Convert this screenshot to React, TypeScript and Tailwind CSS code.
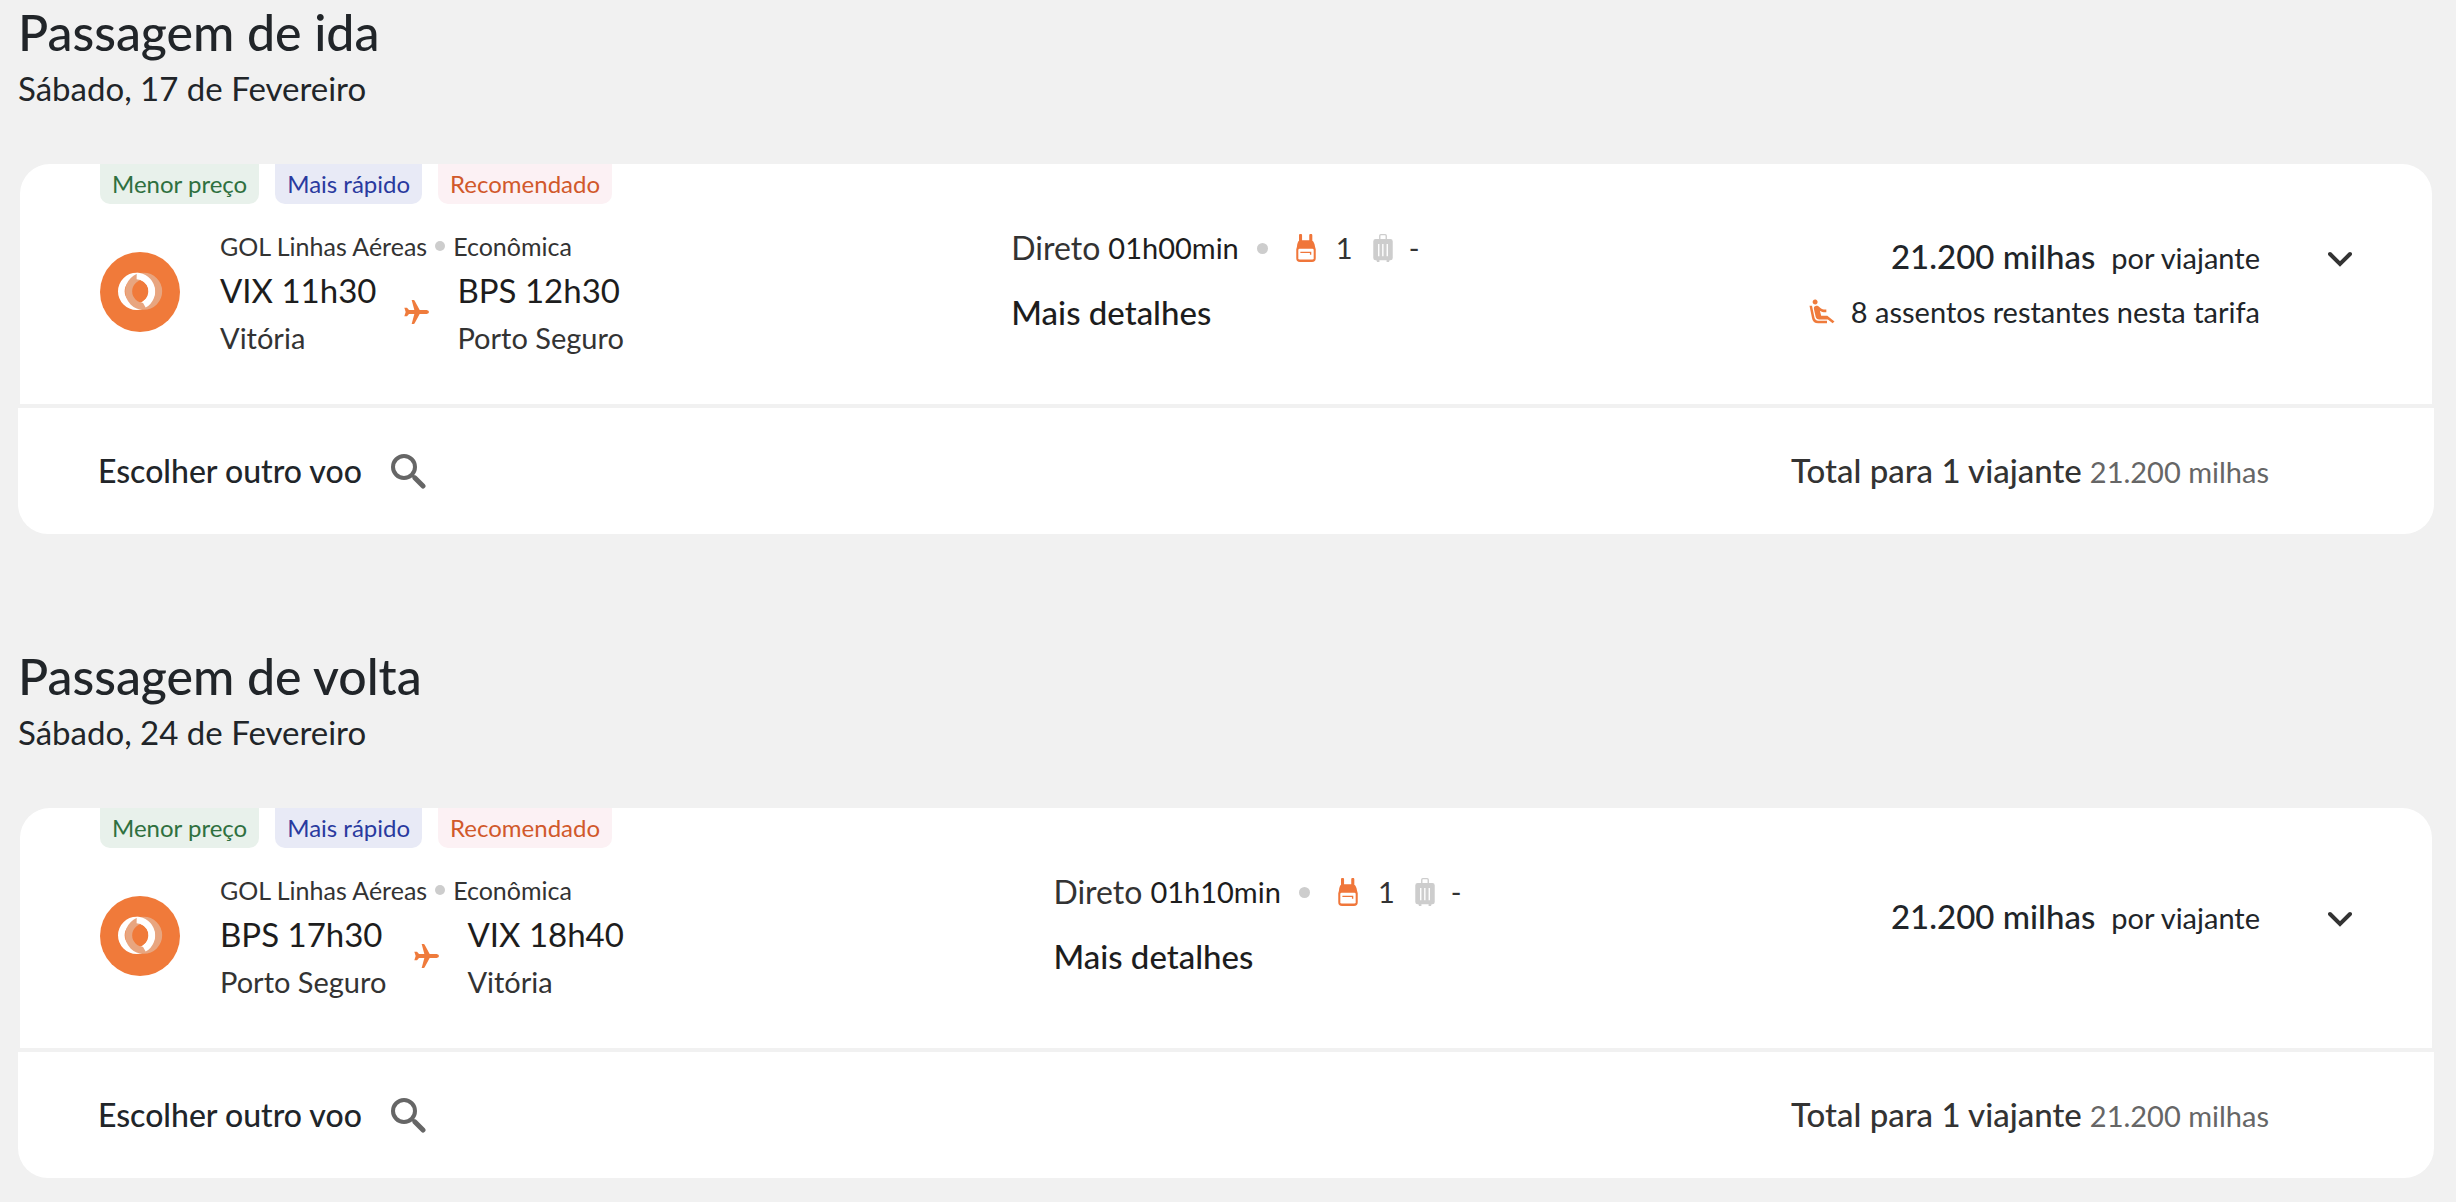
import { MdAirlineSeatReclineExtra } from 'react-icons/md'

type Flight = {
  title: string
  date: string
  airline: string
  cabin: string
  from: { code: string; time: string; city: string }
  to: { code: string; time: string; city: string }
  duration: string
  miles: string
  seats?: string
}

const FLIGHTS: Flight[] = [
  {
    title: 'Passagem de ida',
    date: 'Sábado, 17 de Fevereiro',
    airline: 'GOL Linhas Aéreas',
    cabin: 'Econômica',
    from: { code: 'VIX', time: '11h30', city: 'Vitória' },
    to: { code: 'BPS', time: '12h30', city: 'Porto Seguro' },
    duration: '01h00min',
    miles: '21.200 milhas',
    seats: '8 assentos restantes nesta tarifa',
  },
  {
    title: 'Passagem de volta',
    date: 'Sábado, 24 de Fevereiro',
    airline: 'GOL Linhas Aéreas',
    cabin: 'Econômica',
    from: { code: 'BPS', time: '17h30', city: 'Porto Seguro' },
    to: { code: 'VIX', time: '18h40', city: 'Vitória' },
    duration: '01h10min',
    miles: '21.200 milhas',
  },
]

const TAGS = [
  { label: 'Menor preço', className: 'bg-[#e8f1eb] text-[#2f7040]' },
  { label: 'Mais rápido', className: 'bg-[#e8eaf6] text-[#2a3a9f]' },
  { label: 'Recomendado', className: 'bg-[#fcf1f4] text-[#d1592b]' },
]

function GolLogo() {
  return (
    <svg viewBox="0 0 240 240" className="w-20 h-20 shrink-0 mt-5" aria-hidden>
      <circle cx="120" cy="120" r="120" fill="#f07a3a" />
      <circle cx="110" cy="118" r="46" fill="none" stroke="#fff" strokeWidth="20" />
      <circle cx="131" cy="118" r="45" fill="none" stroke="#e8a57f" strokeWidth="21" />
      <path d="M110 72 A46 46 0 0 1 132 158" fill="none" stroke="#fff" strokeWidth="20" />
    </svg>
  )
}

function PlaneIcon() {
  return (
    <svg viewBox="0 0 75 72" className="w-[25px] h-6 shrink-0" fill="#ef7b3c" aria-hidden>
      <path d="M75 36q0 5-7 6H47L32 70q-1 2-3 2h-6l8-30H15l-6 7H1l4-13-4-13h8l6 7h16L23 0h6q2 0 3 2l15 28h21q7 1 7 6z" />
    </svg>
  )
}

function BackpackIcon() {
  return (
    <svg viewBox="0 0 57 82" className="w-5 h-7 shrink-0" aria-hidden>
      <path
        d="M8 20V4a4 4 0 0 1 9 0v14h21V4a4 4 0 0 1 9 0v16q6 4 8 17l2 8v26q0 11-11 11H11Q0 82 0 71V45l2-8Q3 24 8 20z"
        fill="#f0763a"
      />
      <rect x="6" y="43" width="45" height="32" rx="4" fill="#fff" />
      <path d="M12 54h30v7" fill="none" stroke="#f0763a" strokeWidth="4" />
    </svg>
  )
}

function SuitcaseIcon() {
  return (
    <svg viewBox="0 0 57 82" className="w-5 h-7 shrink-0" aria-hidden>
      <path d="M19 17V5q0-3 3-3h13q3 0 3 3v12" fill="none" stroke="#cdcdcd" strokeWidth="4" />
      <rect y="15" width="57" height="62" rx="7" fill="#cdcdcd" />
      <path d="M9 76h9v6h-7zM39 76h9l-2 6h-7z" fill="#cdcdcd" />
      <path d="M16 29v36M28 29v36M41 29v36" stroke="#fff" strokeWidth="4" />
    </svg>
  )
}

function SearchIcon() {
  return (
    <svg viewBox="0 0 36 36" className="w-9 h-9 shrink-0" fill="none" stroke="#666" aria-hidden>
      <circle cx="14" cy="14" r="11" strokeWidth="4" />
      <path d="M21 21l4 4" strokeWidth="3" />
      <path d="M25 25l8 8" strokeWidth="5" strokeLinecap="round" />
    </svg>
  )
}

function Endpoint({ code, time, city }: { code: string; time: string; city: string }) {
  return (
    <div className="flex flex-col gap-2">
      <p className="text-[33px] leading-10 text-[#1d1d1d]">
        {code} {time}
      </p>
      <p className="text-[29px] leading-10">{city}</p>
    </div>
  )
}

function FlightSection({ flight }: { flight: Flight }) {
  return (
    <section>
      <h2 className="text-[50px] leading-[56px] font-medium text-[#212529]">{flight.title}</h2>
      <p className="mt-2 text-[33px] leading-10 text-[#212529]">{flight.date}</p>

      <article className="mt-14">
        <div className="mx-[2px] px-20 pb-[46px] bg-white rounded-t-[30px]">
          <ul className="flex gap-4">
            {TAGS.map((tag) => (
              <li key={tag.label} className={`px-3 h-10 rounded-b-[10px] text-[24px] leading-10 ${tag.className}`}>
                {tag.label}
              </li>
            ))}
          </ul>

          <div className="flex justify-between items-start pt-6 text-[#333]">
            <div className="flex gap-10 pt-1">
              <GolLogo />
              <div className="flex flex-col gap-[10px]">
                <div className="flex items-center gap-2 text-[25px] leading-7">
                  <span>{flight.airline}</span>
                  <span className="w-[10px] h-[10px] rounded-full bg-[#cdcdcd]" />
                  <span>{flight.cabin}</span>
                </div>
                <div className="flex items-center gap-7">
                  <Endpoint {...flight.from} />
                  <div className="pb-1">
                    <PlaneIcon />
                  </div>
                  <Endpoint {...flight.to} />
                </div>
              </div>
            </div>

            <div className="flex flex-col items-start gap-6">
              <div className="flex items-center text-[29px] leading-10">
                <span className="text-[32px]">Direto</span>
                <span className="ml-2 text-[#1d1d1d]">{flight.duration}</span>
                <span className="ml-[18px] w-[11px] h-[11px] rounded-full bg-[#cdcdcd]" />
                <span className="ml-7 flex items-center gap-5">
                  <BackpackIcon />
                  <span>1</span>
                </span>
                <span className="ml-5 flex items-center gap-4">
                  <SuitcaseIcon />
                  <span>-</span>
                </span>
              </div>
              <button type="button" className="text-[33px] leading-10 font-medium text-[#1d1d1d]">
                Mais detalhes
              </button>
            </div>

            <div className={`flex items-start text-[#212529] ${flight.seats ? 'pt-2' : 'pt-6'}`}>
              <div className="flex flex-col items-end gap-[14px]">
                <p className="flex items-baseline gap-4 text-[29px] leading-10">
                  <strong className="text-[33px] font-medium">{flight.miles}</strong>
                  <span>por viajante</span>
                </p>
                {flight.seats && (
                  <p className="flex items-center gap-[14px] text-[29px] leading-10">
                    <MdAirlineSeatReclineExtra className="w-[30px] h-[30px] text-[#ef7b3c]" aria-hidden />
                    {flight.seats}
                  </p>
                )}
              </div>
              <button type="button" aria-label="Expandir" className="ml-[68px] h-[46px] flex items-center">
                <svg viewBox="0 0 24 16" className="w-6 h-4" fill="none" stroke="#333" strokeWidth="4" aria-hidden>
                  <path d="M2 3l10 10L22 3" strokeLinecap="round" />
                </svg>
              </button>
            </div>
          </div>
        </div>

        <div className="mt-1 pl-20 pr-[165px] h-[126px] flex items-center justify-between bg-white rounded-b-[30px]">
          <button type="button" className="flex items-center gap-7 text-[32px] leading-10 font-medium text-[#212529]">
            Escolher outro voo
            <SearchIcon />
          </button>
          <p className="flex items-baseline gap-2 text-[29px] leading-10 text-[#666]">
            <span className="text-[33px] font-medium text-[#333]">Total para 1 viajante</span>
            {flight.miles}
          </p>
        </div>
      </article>
    </section>
  )
}

export default function App() {
  return (
    <main className="min-h-screen flex flex-col gap-[114px] pt-1 pb-6 pl-[18px] pr-[22px] bg-[#f1f1f1] font-['Lato','Noto_Sans',sans-serif]">
      {FLIGHTS.map((flight) => (
        <FlightSection key={flight.title} flight={flight} />
      ))}
    </main>
  )
}
